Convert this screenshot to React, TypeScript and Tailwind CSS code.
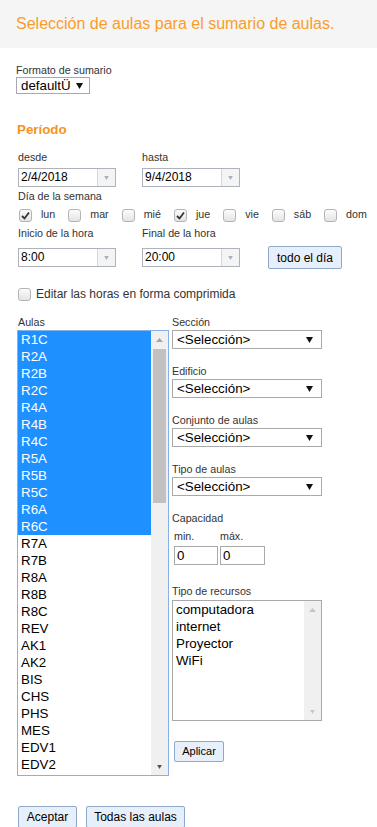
const font = { fontFamily: '"Liberation Sans", Arial, sans-serif' };

const aulas = [
  "R1C", "R2A", "R2B", "R2C", "R4A", "R4B", "R4C", "R5A", "R5B", "R5C", "R6A", "R6C",
  "R7A", "R7B", "R8A", "R8B", "R8C", "REV", "AK1", "AK2", "BIS", "CHS", "PHS", "MES", "EDV1", "EDV2",
];
const seleccionadas = 12;

const dias: [string, boolean][] = [
  ["lun", true], ["mar", false], ["mié", false], ["jue", true], ["vie", false], ["sáb", false], ["dom", false],
];

const recursos = ["computadora", "internet", "Proyector", "WiFi"];

function Label({ children, className = "" }: { children: React.ReactNode; className?: string }) {
  return <div className={`text-[10.7px] leading-[13px] text-[#333] ${className}`}>{children}</div>;
}

function Caret({ color = "#111", w = 7, h = 6 }: { color?: string; w?: number; h?: number }) {
  return (
    <svg width={w} height={h} viewBox="0 0 7 6">
      <path d="M0 0 H7 L3.5 6 Z" fill={color} />
    </svg>
  );
}

function CaretUp({ color }: { color: string }) {
  return (
    <svg width="7" height="4" viewBox="0 0 7 4">
      <path d="M0 4 H7 L3.5 0 Z" fill={color} />
    </svg>
  );
}

function Checkbox({ checked }: { checked: boolean }) {
  return (
    <div className="w-[13px] h-[13px] shrink-0 rounded-[3px] border border-[#b4b4b4] bg-gradient-to-b from-[#fbfbfb] to-[#e4e4e4] flex items-center justify-center">
      {checked && (
        <svg width="9" height="9" viewBox="0 0 9 9">
          <path d="M1 5 L3.5 7.5 L8 1.5" stroke="#333" strokeWidth="1.8" fill="none" />
        </svg>
      )}
    </div>
  );
}

function ComboInput({ value }: { value: string }) {
  return (
    <div className="w-[98px] h-[19px] border border-[#aeb3bb] bg-white flex">
      <div className="flex-1 pl-[2px] text-[12px] leading-[17px] text-black">{value}</div>
      <div className="w-[18px] border-l border-[#d3d6db] bg-[#f4f4f4] flex items-center justify-center">
        <Caret color="#a3b1c6" w={7} h={4} />
      </div>
    </div>
  );
}

function Select({ value, className = "" }: { value: string; className?: string }) {
  return (
    <div className={`h-[19px] border border-[#a9a9a9] bg-white flex items-center pl-[4px] pr-[8px] ${className}`}>
      <span className="text-[13.33px] leading-[16px] text-black">{value}</span>
      <span className="ml-auto">
        <Caret />
      </span>
    </div>
  );
}

function Btn({ children, className = "" }: { children: React.ReactNode; className?: string }) {
  return (
    <div className={`border border-[#8fa9cb] bg-[#e7effa] rounded-[2px] flex items-center justify-center text-black ${className}`}>
      {children}
    </div>
  );
}

export default function App() {
  return (
    <div style={font} className="w-[377px] h-[827px] bg-white overflow-hidden">
      {/* Cabecera */}
      <div className="h-[48px] bg-[#f5f5f5] flex items-center px-4">
        <h1 className="text-[16px] leading-[18px] text-[#f99d2c]">Selección de aulas para el sumario de aulas.</h1>
      </div>

      <div className="pl-4">
        {/* Formato */}
        <Label className="mt-[16px]">Formato de sumario</Label>
        <div className="w-[74px] h-[17px] border border-[#a9a9a9] flex items-center pl-[4px] pr-[6px]">
          <span className="text-[13.33px] leading-[15px] text-black">defaultÜ</span>
          <span className="ml-auto">
            <Caret />
          </span>
        </div>

        {/* Periodo */}
        <div className="mt-[28px] ml-[1px] text-[13.33px] leading-[16px] font-bold text-[#f7931e]">Período</div>

        <div className="ml-[2px]">
          <div className="flex mt-[13px]">
            <Label className="w-[124px]">desde</Label>
            <Label>hasta</Label>
          </div>
          <div className="flex mt-[4px]">
            <div className="w-[124px]">
              <ComboInput value="2/4/2018" />
            </div>
            <ComboInput value="9/4/2018" />
          </div>

          <Label className="mt-[3px]">Día de la semana</Label>
          <div className="flex items-center gap-[13px] mt-[4px] ml-[1px]">
            {dias.map(([d, c]) => (
              <div key={d} className="flex items-center gap-[9px]">
                <div className="mt-[2px]">
                  <Checkbox checked={c} />
                </div>
                <span className="text-[10.7px] leading-[13px] text-[#333]">{d}</span>
              </div>
            ))}
          </div>

          <div className="flex mt-[5px]">
            <Label className="w-[124px]">Inicio de la hora</Label>
            <Label>Final de la hora</Label>
          </div>
          <div className="flex items-center mt-[6px] h-[23px]">
            <div className="w-[124px]">
              <ComboInput value="8:00" />
            </div>
            <ComboInput value="20:00" />
            <Btn className="ml-[28px] w-[74px] h-[23px] text-[12px]">todo el día</Btn>
          </div>

          <div className="flex items-center gap-[5px] mt-[19px]">
            <Checkbox checked={false} />
            <span className="text-[12px] leading-[14px] text-[#333] -mt-[2px]">Editar las horas en forma comprimida</span>
          </div>
        </div>

        {/* Aulas + filtros */}
        <div className="flex mt-[15px] ml-[1px]">
          <div className="w-[152px]">
            <Label className="pl-[1px]">Aulas</Label>
            <div className="mt-[1px] h-[446px] border border-[#86b0e6] flex overflow-hidden">
              <div className="flex-1">
                {aulas.map((a, i) => (
                  <div
                    key={a}
                    className={`h-[17px] pl-[3px] text-[13.33px] leading-[17px] ${
                      i < seleccionadas ? "bg-[#1e90ff] text-white" : "text-black"
                    }`}
                  >
                    {a}
                  </div>
                ))}
              </div>
              <div className="w-[17px] bg-[#f0f0f0] flex flex-col">
                <div className="h-[17px] flex items-center justify-center">
                  <CaretUp color="#a3a3a3" />
                </div>
                <div className="mt-[1px] mx-[2px] h-[154px] bg-[#c1c1c1]" />
                <div className="flex-1" />
                <div className="h-[17px] flex items-center justify-center">
                  <Caret color="#505050" w={7} h={4} />
                </div>
              </div>
            </div>
          </div>

          <div className="ml-[3px] w-[150px]">
            <Label>Sección</Label>
            <Select value="<Selección>" className="mt-[1px]" />
            <Label className="mt-[16px]">Edificio</Label>
            <Select value="<Selección>" className="mt-[1px]" />
            <Label className="mt-[16px]">Conjunto de aulas</Label>
            <Select value="<Selección>" className="mt-[1px]" />
            <Label className="mt-[16px]">Tipo de aulas</Label>
            <Select value="<Selección>" className="mt-[1px]" />

            <Label className="mt-[16px]">Capacidad</Label>
            <div className="flex ml-[2px] mt-[5px]">
              <Label className="w-[46px]">min.</Label>
              <Label>máx.</Label>
            </div>
            <div className="flex gap-[2px] ml-[2px] mt-[3px]">
              <div className="w-[44px] h-[19px] border border-[#a9a9a9] pl-[2px] text-[13.33px] leading-[17px] text-black">0</div>
              <div className="w-[45px] h-[19px] border border-[#a9a9a9] pl-[2px] text-[13.33px] leading-[17px] text-black">0</div>
            </div>

            <Label className="mt-[20px]">Tipo de recursos</Label>
            <div className="mt-[2px] h-[121px] border border-[#a9a9a9] flex">
              <div className="flex-1 pl-[3px]">
                {recursos.map((r) => (
                  <div key={r} className="h-[17px] text-[13.33px] leading-[17px] text-black">
                    {r}
                  </div>
                ))}
              </div>
              <div className="w-[17px] bg-[#f0f0f0] flex flex-col justify-between">
                <div className="h-[17px] flex items-center justify-center">
                  <CaretUp color="#c6c6c6" />
                </div>
                <div className="h-[17px] flex items-center justify-center">
                  <Caret color="#c6c6c6" w={7} h={4} />
                </div>
              </div>
            </div>

            <Btn className="mt-[20px] ml-[2px] w-[50px] h-[21px] text-[11px]">Aplicar</Btn>
          </div>
        </div>

        {/* Botones */}
        <div className="flex gap-[9px] mt-[30px] ml-[2px]">
          <Btn className="w-[59px] h-[22px] text-[12px]">Aceptar</Btn>
          <Btn className="w-[99px] h-[22px] text-[12px]">Todas las aulas</Btn>
        </div>
      </div>
    </div>
  );
}
